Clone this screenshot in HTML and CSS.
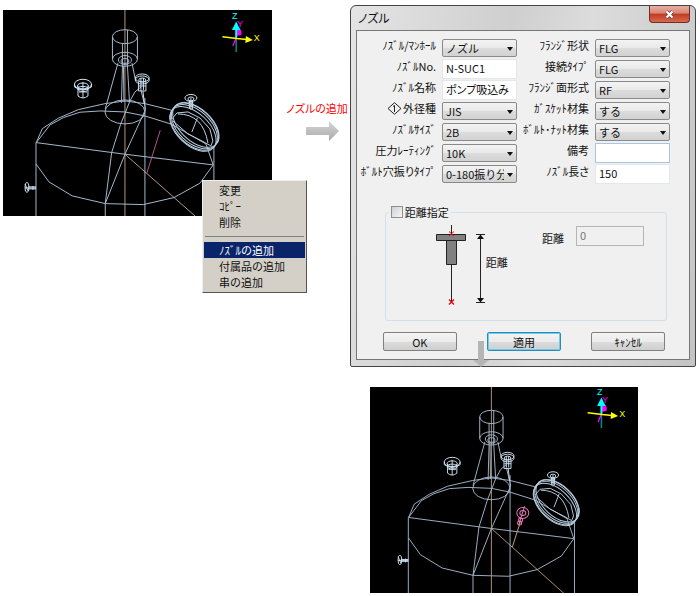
FILE: index.html
```html
<!DOCTYPE html>
<html lang="ja">
<head>
  <meta charset="UTF-8">
  <title>ノズルの追加</title>
  <link rel="stylesheet" href="styles.css">
</head>
<body>
  <main class="flow">
    <div class="view before">
      <svg class="scene" viewBox="0 0 269 206">
        <defs>
          <g id="tank" fill="none" stroke="#a4b8cc">
            <!-- top nozzle and cone -->
            <ellipse cx="122" cy="26.7" rx="12.5" ry="7"/>
            <ellipse cx="122" cy="49.3" rx="12.5" ry="7"/>
            <ellipse cx="122" cy="50" rx="6.5" ry="4.5"/>
            <ellipse cx="122" cy="51" rx="4" ry="2.5"/>
            <path d="M109.5 26.7V49.3M134.5 26.7V49.3M119.5 33V56L118.5 93M124.5 20V56L126.5 91M115 53L102.3 99M129 53L132.5 70M120.5 56L121 92"/>
            <ellipse cx="122" cy="102" rx="20" ry="12"/>
            <!-- dome -->
            <path d="M33.3 132.7L39.3 118.7L55.3 108.3L75.3 99.7L102 93.7L122 91L142 93.7L168.7 100.3"/>
            <path d="M33.3 132.7L47 115L60.3 107.7L77 102.3L97 101L122 102L142 106L168.7 114.3L203 134L210.3 155"/>
            <path d="M33 132.7V154L46 172L69.3 186L102.3 193.7L140.3 194.7L171 187.7L197 173.3L210.3 155L122 144.3L33.3 132.7"/>
            <path d="M102.3 193.7L122 144.3L142.7 99.3L138 80M102.3 193.7L108.7 142.7L117.7 114.3L127 91L132 82L138 77"/>
            <path d="M33 154V222M102.3 194V222M142 88V222M211 137V222"/>
            <!-- small nozzles -->
            <g stroke="#cfe2f2">
              <ellipse cx="80" cy="74.3" rx="8.5" ry="5"/>
              <ellipse cx="80" cy="76" rx="5.5" ry="3"/>
              <ellipse cx="80" cy="79" rx="5" ry="2.5"/>
              <path d="M75 76V86Q80 90 85 86V76M80 72V88M76 82H84M71.5 74V77Q80 83 88.5 77V74"/>
              <ellipse cx="139.3" cy="68" rx="7" ry="4"/>
              <ellipse cx="139.3" cy="70" rx="7" ry="4"/>
              <ellipse cx="139.3" cy="70" rx="3.5" ry="2"/>
              <path d="M135.5 72V81H143V72M138 68V80M140.500 68V80M136 76H143M140 81L141.5 94"/>
              <ellipse cx="188" cy="88" rx="6" ry="3.5"/>
              <ellipse cx="188" cy="89" rx="3" ry="2"/>
              <path d="M186.5 90V99M188 88V100M189.5 90V99M185.5 93H190.5M186 96H190"/>
              <ellipse cx="24" cy="177.5" rx="2" ry="5"/>
              <path d="M22 174L25 181M25 177H33M25 179H33M22 178H33M30 176V180"/>
            </g>
            <!-- manhole -->
            <g stroke="#b9cfe2">
              <ellipse cx="193" cy="115" rx="28" ry="16" transform="rotate(43 193 115)"/>
              <ellipse cx="192" cy="116" rx="28" ry="17" transform="rotate(43 192 116)"/>
              <ellipse cx="191" cy="117.5" rx="28" ry="17" transform="rotate(43 191 117.5)"/>
              <ellipse cx="190" cy="119" rx="28" ry="16" transform="rotate(43 190 119)"/>
              <path d="M169 109L174 103L185 102L197 108L207 119L210 131L208 136L199 131L185 124L170 111M194.500 108L189 122M175 104Q200 104 205 133"/>
            </g>
          </g>
          <g id="center" fill="none" stroke="#b59679">
            <path d="M122 -8V222M122 144.3L209 221"/>
          </g>
          <g id="axis">
            <path d="M233.3 28V42" stroke="#008b8b" stroke-width="1.5"/>
            <path d="M233.3 28L230 36" stroke="#f0f" stroke-width="1.3"/>
            <path d="M233 26L234 20Q236 16 238.5 21V25Z" fill="#f0f"/>
            <path d="M233.3 29V18" stroke="#0ff" stroke-width="2"/>
            <path d="M229 20L233.3 11.5L237.5 20Z" fill="#0ff"/>
            <path d="M219.5 26.7L234 28.5L244 29.5" stroke="#ff0" stroke-width="1.5" fill="none"/>
            <path d="M243 26L250 30L242.5 33Z" fill="#ff0"/>
            <text x="229" y="9" fill="#0ff">Z</text>
            <text x="234" y="17" fill="#f0f">Y</text>
            <text x="251" y="31" fill="#ff0">X</text>
          </g>
        </defs>
        <use href="#center"/>
        <use href="#tank"/>
        <path d="M157.3 120.3L144 163" stroke="#b9528a"/>
        <use href="#axis"/>
      </svg>

      <ul class="menu">
        <li><button type="button">変更</button></li>
        <li><button type="button">ｺﾋﾟｰ</button></li>
        <li><button type="button">削除</button></li>
        <li class="separator"></li>
        <li><button type="button" class="active">ﾉｽﾞﾙの追加</button></li>
        <li><button type="button">付属品の追加</button></li>
        <li><button type="button">串の追加</button></li>
      </ul>
    </div>

    <div class="step">
      <span>ノズルの追加</span>
      <svg width="34" height="20" viewBox="0 0 34 20">
        <defs>
          <linearGradient id="gray" x1="0" y1="0" x2="0" y2="1">
            <stop offset="0" stop-color="#d6d6d6"/>
            <stop offset="1" stop-color="#a9a9a9"/>
          </linearGradient>
        </defs>
        <path d="M0 6H23V0L33 10L23 20V14H0Z" fill="url(#gray)"/>
      </svg>
    </div>

    <div class="dialog">
      <div class="titlebar">
        <span>ノズル</span>
        <button type="button" class="close" aria-label="閉じる">
          <svg width="11" height="9" viewBox="0 0 11 9">
            <path d="M2.5 1.5L8.5 7.5M8.5 1.5L2.5 7.5" stroke="#5c4040" stroke-width="3.6"/>
            <path d="M2.5 1.5L8.5 7.5M8.5 1.5L2.5 7.5" stroke="#fff" stroke-width="2.2"/>
          </svg>
        </button>
      </div>
      <form class="content">
        <div class="fields">
          <label for="kind">ﾉｽﾞﾙ/ﾏﾝﾎｰﾙ</label>
          <span class="select"><select id="kind"><option>ノズル</option></select></span>
          <label for="shape">ﾌﾗﾝｼﾞ形状</label>
          <span class="select"><select id="shape"><option>FLG</option></select></span>

          <label for="number">ﾉｽﾞﾙNo.</label>
          <input type="text" id="number" value="N-SUC1">
          <label for="joint">接続ﾀｲﾌﾟ</label>
          <span class="select"><select id="joint"><option>FLG</option></select></span>

          <label for="name">ﾉｽﾞﾙ名称</label>
          <input type="text" id="name" value="ポンプ吸込み">
          <label for="face">ﾌﾗﾝｼﾞ面形式</label>
          <span class="select"><select id="face"><option>RF</option></select></span>

          <label for="diameter"><svg class="mark" width="15" height="13" viewBox="0 0 15 13"><path d="M1 6.5L7.5 .7L14 6.5L7.5 12.3ZM6 4.5L7.5 3.5V10" fill="none" stroke="#222"/></svg>外径種</label>
          <span class="select"><select id="diameter"><option>JIS</option></select></span>
          <label for="gasket">ｶﾞｽｹｯﾄ材集</label>
          <span class="select"><select id="gasket"><option>する</option></select></span>

          <label for="size">ﾉｽﾞﾙｻｲｽﾞ</label>
          <span class="select"><select id="size"><option>2B</option></select></span>
          <label for="bolt">ﾎﾞﾙﾄ･ﾅｯﾄ材集</label>
          <span class="select"><select id="bolt"><option>する</option></select></span>

          <label for="rating">圧力ﾚｰﾃｨﾝｸﾞ</label>
          <span class="select"><select id="rating"><option>10K</option></select></span>
          <label for="note">備考</label>
          <input type="text" id="note" class="current">

          <label for="hole">ﾎﾞﾙﾄ穴振りﾀｲﾌﾟ</label>
          <span class="select"><select id="hole"><option>0-180振り分け</option></select></span>
          <label for="length">ﾉｽﾞﾙ長さ</label>
          <input type="text" id="length" value="150">
        </div>

        <fieldset>
          <legend><input type="checkbox" id="useDistance"><label for="useDistance">距離指定</label></legend>
          <div class="distance">
            <svg width="51" height="82" viewBox="0 0 51 82">
              <path d="M16.5 0V78" stroke="#222"/>
              <path d="M1.5 9.5H30.5V15.5H1.5ZM11.5 15.5H21.5V39.5H11.5Z" fill="#808080" stroke="#222"/>
              <path d="M14 6.5L19 11M19 6.5L14 11" stroke="#e00"/>
              <path d="M14 74.5L19 79.5M19 74.5L14 79.5" stroke="#e00" stroke-width="1.3"/>
              <path d="M45.5 9V78M41 9.5H50M41 77.5H50" stroke="#222"/>
              <path d="M42 14L45.5 9.5L49 14ZM42 73L45.5 77.5L49 73Z" fill="#111"/>
            </svg>
            <span class="caption">距離</span>
            <label for="distance">距離</label>
            <input type="text" id="distance" value="0" disabled>
          </div>
        </fieldset>

        <div class="buttons">
          <button type="button">OK</button>
          <button type="button" class="default">適用</button>
          <button type="button">ｷｬﾝｾﾙ</button>
        </div>
      </form>
      <svg class="down" width="16" height="26" viewBox="0 0 16 26">
        <path d="M5 0H11V19H16L8 26L0 19H5Z" fill="#b5b5b5"/>
      </svg>
    </div>

    <div class="view after">
      <svg class="scene" viewBox="0 0 268 206">
        <g transform="translate(7.5 4.6) scale(.933 .948)">
          <use href="#center"/>
          <use href="#tank"/>
        </g>
        <path d="M142.3 159.7L150 135.7" stroke="#b59679"/>
        <g fill="none" stroke="#e877b5">
          <ellipse cx="152.7" cy="126" rx="6" ry="5.5"/>
          <ellipse cx="152.7" cy="126" rx="3" ry="2.5"/>
          <path d="M154.5 119L149 137"/>
          <circle cx="150.5" cy="133" r="2"/>
          <circle cx="149.5" cy="136" r="2"/>
        </g>
        <use href="#axis" x="-2" y="-1"/>
      </svg>
    </div>
  </main>
</body>
</html>
```
FILE: styles.css
```css
body {
  margin: 0;
  padding: 5px 4px 4px 3px;
  background-color: #fff;
  color: #111;
  font-family: "Noto Sans CJK JP", sans-serif;
  font-size: 11px;
  line-height: 14px;
}

button,
input,
select {
  box-sizing: border-box;
  margin: 0;
  font: inherit;
  color: inherit;
}

.flow {
  display: grid;
  grid-template-columns: 269fr 78fr 346fr;
  row-gap: 20px;
  align-items: start;
}

.view {
  position: relative;
}

.before {
  margin-top: 5px;
}

.after {
  grid-column: 3;
  margin-left: 20px;
  margin-right: 58px;
}

.scene {
  display: block;
  width: 100%;
  background-color: #000;
}

.scene text {
  font-family: "Liberation Sans", sans-serif;
  font-size: 9px;
}

/* context menu */
.menu {
  position: absolute;
  top: 170px;
  left: 199px;
  width: 101px;
  margin: 0;
  padding: 1px 1px 2px;
  list-style: none;
  background-color: #d4d0c8;
  border: 1px solid #eee;
  border-right: 1px solid #555;
  border-bottom: 1px solid #555;
  z-index: 1;
}

.menu button {
  display: block;
  width: 100%;
  height: 16px;
  padding: 0 0 0 15px;
  border: none;
  background: none;
  text-align: left;
  line-height: 16px;
}

.menu .active {
  background-color: #0a246a;
  color: #fff;
}

.separator {
  height: 1px;
  margin: 6px 1px 5px;
  background-color: #808080;
}

/* arrow between the drawing and the dialog */
.step {
  display: flex;
  flex-direction: column;
  align-items: center;
  gap: 6px;
  margin-top: 96px;
  color: #f00;
  white-space: nowrap;
}

.step span {
  align-self: flex-end;
  padding-right: 2px;
  font-feature-settings: "palt";
}

.step svg {
  margin-left: 24px;
}

/* dialog */
.dialog {
  position: relative;
  box-sizing: border-box;
  padding: 0 5px 6px;
  border: 1px solid #444;
  border-radius: 6px 6px 2px 2px;
  background: linear-gradient(100deg, #e4e4e4, #cfcfcf 40%, #dcdcdc 60%, #c4c4c4);
}

.titlebar {
  display: flex;
  justify-content: space-between;
  align-items: flex-start;
  height: 24px;
  padding-left: 2px;
  font-size: 12px;
  line-height: 24px;
  font-feature-settings: "palt";
}

.close {
  display: flex;
  align-items: center;
  justify-content: center;
  width: 41px;
  height: 17px;
  padding: 0;
  border: 1px solid #6b3028;
  border-top: none;
  border-radius: 0 0 4px 4px;
  background: linear-gradient(#e9b0a4, #d98574 45%, #c03a20 50%, #d8694e);
}

.content {
  padding: 7px 19px 8px 4px;
  border: 1px solid #777;
  background-color: #f0f0f0;
}

.fields {
  display: grid;
  grid-template-columns: 12fr 75px 13fr 75px;
  grid-auto-rows: 20px;
  gap: 1px 6px;
  align-items: center;
}

.fields label {
  align-self: start;
  display: flex;
  justify-content: flex-end;
  align-items: center;
  white-space: nowrap;
  font-feature-settings: "palt";
}

.mark {
  margin-right: 1px;
}

input[type="text"] {
  width: 100%;
  height: 20px;
  padding: 0 3px 2px;
  border: 1px solid #e3e6ea;
  background-color: #fff;
  font-feature-settings: "palt";
}

input.current {
  border-color: #a5c7e4;
}

.select {
  position: relative;
  height: 18px;
}

.select::after {
  content: "";
  position: absolute;
  top: 8px;
  right: 4px;
  border: 3px solid transparent;
  border-top: 4px solid #111;
  border-bottom: none;
  pointer-events: none;
}

select {
  display: block;
  width: 100%;
  height: 18px;
  padding: 0 12px 0 3px;
  border: 1px solid #8a8a8a;
  border-radius: 2px;
  background: linear-gradient(#f3f3f3, #e9e9e9 50%, #dcdcdc 50%, #d2d2d2);
  appearance: none;
}

fieldset {
  min-width: 0;
  margin: 21px 3px 0 24px;
  padding: 0 0 13px;
  border: 1px solid #d3dfe9;
  border-radius: 3px;
}

legend {
  display: flex;
  align-items: center;
  gap: 2px;
  margin-left: 3px;
  padding: 0 2px;
}

input[type="checkbox"] {
  width: 12px;
  height: 12px;
  border: 1px solid #8e8f8f;
  background: linear-gradient(135deg, #cbd0d6, #f6f6f6);
  appearance: none;
}

.distance {
  display: flex;
  align-items: flex-start;
  padding: 6px 22px 0 49px;
}

.caption {
  margin-top: 30px;
}

.distance label {
  margin: 6px 12px 0 auto;
}

.distance input[type="text"] {
  width: 68px;
  margin-top: 1px;
  border-color: #b5b5b5;
  background-color: #f0f0f0;
  color: #777;
}

.buttons {
  display: flex;
  justify-content: space-between;
  margin: 11px 5px 0 22px;
}

.buttons button {
  width: 74px;
  height: 19px;
  padding: 0;
  border: 1px solid #808080;
  border-radius: 2px;
  background: linear-gradient(#f4f4f4, #ebebeb 50%, #dddddd 50%, #cfcfcf);
  line-height: 16px;
}

.buttons .default {
  border-color: #2a8ab8;
  box-shadow: inset 0 0 0 1px #6fcdf0;
}

.down {
  position: absolute;
  left: 122px;
  bottom: -1px;
}
```
